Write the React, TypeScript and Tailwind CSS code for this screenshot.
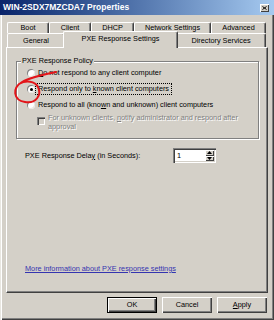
import React from "react";

function Radio({ checked }: { checked?: boolean }) {
  return (
    <span className="w-[8px] h-[8px] shrink-0 rounded-full bg-white shadow-[inset_1px_1px_0_#808080,inset_-1px_-1px_0_#e8e6e0] flex items-center justify-center">
      {checked && <span className="w-[3px] h-[3px] rounded-full bg-black" />}
    </span>
  );
}

function Tab({ className, children }: { className: string; children: React.ReactNode }) {
  return (
    <div
      className={`${className} flex items-center justify-center border-t border-l border-r border-t-white border-l-white border-r-[#404040] rounded-t-[2px] shadow-[inset_-1px_0_0_#808080]`}
    >
      {children}
    </div>
  );
}

function Button({ children, isDefault }: { children: React.ReactNode; isDefault?: boolean }) {
  return (
    <div
      className={
        isDefault
          ? "w-[50px] h-[16px] flex items-center justify-center border border-black shadow-[inset_1px_1px_0_#fff,inset_-1px_-1px_0_#404040,inset_-2px_-2px_0_#808080]"
          : "w-[50px] h-[16px] flex items-center justify-center shadow-[inset_1px_1px_0_#fff,inset_-1px_-1px_0_#404040,inset_-2px_-2px_0_#808080]"
      }
    >
      {children}
    </div>
  );
}

export default function App() {
  return (
    <div className="relative w-[274px] h-[320px] overflow-hidden flex flex-col bg-[#d4d0c8] text-black text-[7.3px] leading-none font-['Liberation_Sans',Arial,sans-serif] shadow-[inset_1px_0_0_#e8e6e0,inset_2px_0_0_#fff,inset_-1px_-1px_0_#404040,inset_-2px_-2px_0_#808080]">
      {/* Title bar */}
      <div className="h-[15px] shrink-0 flex items-center pl-[3px] pr-[5px] bg-linear-to-r from-[#0a246a] to-[#a6caf0]">
        <span className="text-white font-bold text-[8.5px]">WIN-2SDX7MZCDA7 Properties</span>
        <div className="ml-auto w-[9px] h-[8px] bg-[#d4d0c8] shadow-[inset_1px_1px_0_#fff,inset_-1px_-1px_0_#404040] flex items-center justify-center">
          <svg width="5" height="4" viewBox="0 0 5 4">
            <path d="M0.5 0.5 L4.5 3.5 M4.5 0.5 L0.5 3.5" stroke="#000" strokeWidth="1" />
          </svg>
        </div>
      </div>

      <div className="flex-1 flex flex-col px-[6px] pt-[6px]">
        {/* Back tab row */}
        <div className="flex h-[12px] ml-[1px] pt-[1px]">
          <Tab className="w-[42px]">Boot</Tab>
          <Tab className="w-[42px]">Client</Tab>
          <Tab className="w-[43px]">DHCP</Tab>
          <Tab className="w-[77px]">Network Settings</Tab>
          <Tab className="w-[55px]">Advanced</Tab>
        </div>
        {/* Front tab row */}
        <div className="flex h-[14px] ml-[1px]">
          <Tab className="w-[58px]">General</Tab>
          <div className="relative z-10 self-start w-[115px] h-[17px] -mt-[2px] -mx-[2px] pb-[3px] flex items-center justify-center bg-[#d4d0c8] border-t border-l border-r border-t-white border-l-white border-r-[#404040] rounded-t-[2px] shadow-[inset_-1px_0_0_#808080]">
            PXE Response Settings
          </div>
          <Tab className="w-[90px]">Directory Services</Tab>
        </div>

        {/* Tab panel */}
        <div className="h-[246px] flex flex-col border border-t-white border-l-white border-r-[#404040] border-b-[#404040] shadow-[inset_-1px_-1px_0_#808080]">
          <div className="relative mt-[13px] ml-[9px] w-[243px] h-[78px] pt-[3px] border border-[#808080] shadow-[inset_1px_1px_0_#fff,1px_1px_0_#fff]">
            <span className="absolute -top-[5px] left-[4px] px-[1px] bg-[#d4d0c8]">PXE Response Policy</span>

            <div className="h-[16px] flex items-center gap-[3px] pl-[10px]">
              <Radio />
              <span>
                <span className="underline">D</span>o not respond to any client computer
              </span>
            </div>
            <div className="h-[16px] flex items-center gap-[3px] pl-[10px]">
              <Radio checked />
              <span className="-ml-[3px] px-[2px] py-[1px] border border-dotted border-black">
                Respond only to <span className="underline">k</span>nown client computers
              </span>
            </div>
            <div className="h-[16px] flex items-center gap-[3px] pl-[10px]">
              <Radio />
              <span>
                Respond to all (kno<span className="underline">w</span>n and unknown) client computers
              </span>
            </div>
            <div className="flex items-start gap-[3px] pl-[20px]">
              <span className="mt-[4px] w-[8px] h-[8px] shrink-0 bg-[#d4d0c8] shadow-[inset_1px_1px_0_#808080,inset_2px_2px_0_#404040,inset_-1px_-1px_0_#fff]" />
              <div className="mt-[1px] flex flex-col text-[#808080] [text-shadow:1px_1px_0_#fff]">
                <span className="h-[9px] whitespace-nowrap">
                  For unknown clients, <span className="underline">n</span>otify administrator and respond after
                </span>
                <span className="h-[9px]">approval</span>
              </div>
            </div>
          </div>

          <div className="mt-[9px] pl-[18px] h-[15px] flex items-center">
            <span className="w-[148px]">
              PXE Response Dela<span className="underline">y</span> (in Seconds):
            </span>
            <div className="w-[43px] h-[15px] flex bg-white shadow-[inset_1px_1px_0_#808080,inset_2px_2px_0_#404040,inset_-1px_-1px_0_#fff,inset_-2px_-2px_0_#d4d0c8]">
              <span className="flex-1 flex items-center pl-[4px]">1</span>
              <div className="w-[9px] my-[2px] mr-[2px] flex flex-col">
                <div className="flex-1 flex items-center justify-center bg-[#d4d0c8] shadow-[inset_1px_1px_0_#fff,inset_-1px_-1px_0_#404040]">
                  <svg width="5" height="3" viewBox="0 0 5 3">
                    <path d="M2.5 0 L5 3 L0 3 Z" fill="#000" />
                  </svg>
                </div>
                <div className="flex-1 flex items-center justify-center bg-[#d4d0c8] shadow-[inset_1px_1px_0_#fff,inset_-1px_-1px_0_#404040]">
                  <svg width="5" height="3" viewBox="0 0 5 3">
                    <path d="M0 0 L5 0 L2.5 3 Z" fill="#000" />
                  </svg>
                </div>
              </div>
            </div>
          </div>

          <span className="mt-auto mb-[20px] ml-[18px] self-start text-[#3434b0] underline">
            More information about PXE response settings
          </span>
        </div>

        {/* Dialog buttons */}
        <div className="mt-[4px] pr-[1px] flex justify-end gap-[5px]">
          <Button isDefault>OK</Button>
          <Button>Cancel</Button>
          <Button>
            <span>
              <span className="underline">A</span>pply
            </span>
          </Button>
        </div>
      </div>

      {/* Red hand-drawn annotation */}
      <svg className="absolute inset-0 pointer-events-none" width="274" height="320" viewBox="0 0 274 320">
        <path
          d="M56 72 C46 74 31 77 22 82 C12 88 13 100 25 102 C36 104 42 95 38 87 C35 81 26 80 19 84"
          fill="none"
          stroke="#e3151a"
          strokeWidth="2"
          strokeLinecap="round"
        />
      </svg>
    </div>
  );
}
